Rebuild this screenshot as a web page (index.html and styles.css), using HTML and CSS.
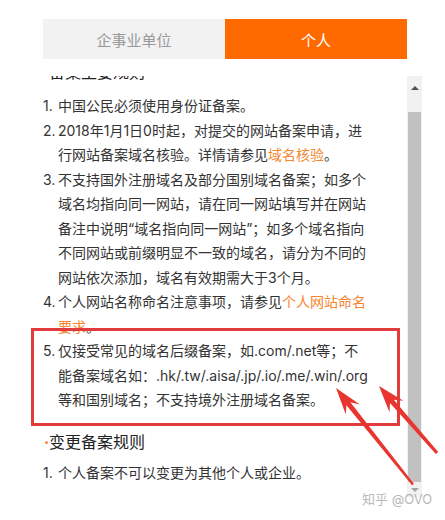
FILE: index.html
```html
<!DOCTYPE html>
<html lang="zh-CN">
<head>
<meta charset="utf-8">
<title>备案规则</title>
<link rel="stylesheet" href="styles.css">
</head>
<body>
<div class="page">
  <div class="tabs">
    <div class="tab">企事业单位</div>
    <div class="tab tab-active">个人</div>
  </div>
  <div class="panel">
    <div class="viewport">
      <div class="content">
        <section class="sec">
          <h3 class="sec-title"><span class="dot"></span>备案主要规则</h3>
          <ol class="rules">
            <li><span class="num">1.</span><span class="txt">中国公民必须使用身份证备案。</span></li>
            <li><span class="num">2.</span><span class="txt">2018年1月1日0时起，对提交的网站备案申请，进行网站备案域名核验。详情请参见<a class="link">域名核验</a>。</span></li>
            <li><span class="num">3.</span><span class="txt">不支持国外注册域名及部分国别域名备案；如多个域名均指向同一网站，请在同一网站填写并在网站备注中说明“域名指向同一网站”；如多个域名指向不同网站或前缀明显不一致的域名，请分为不同的网站依次添加，域名有效期需大于3个月。</span></li>
            <li><span class="num">4.</span><span class="txt">个人网站名称命名注意事项，请参见<a class="link">个人网站命名要求</a>。</span></li>
            <li><span class="num">5.</span><span class="txt">仅接受常见的域名后缀备案，如.com/.net等；不能备案域名如：.hk/.tw/.aisa/.jp/.io/.me/.win/.org等和国别域名；不支持境外注册域名备案。</span></li>
          </ol>
        </section>
        <section class="sec sec-next">
          <h3 class="sec-title"><span class="dot"></span>变更备案规则</h3>
          <ol class="rules">
            <li><span class="num">1.</span><span class="txt">个人备案不可以变更为其他个人或企业。</span></li>
          </ol>
        </section>
      </div>
    </div>
    <div class="scrollbar">
      <div class="sb-btn sb-up"><span class="tri tri-up"></span></div>
      <div class="sb-track"><div class="sb-thumb"></div></div>
      <div class="sb-btn sb-down"><span class="tri tri-down"></span></div>
    </div>
  </div>

  <div class="highlight"></div>

  <svg class="arrows" width="445" height="520" viewBox="0 0 445 520" aria-hidden="true">
    <polygon fill="#e8352f" points="336,388 359.9,404.5 350.4,402.2 413.9,483.8 412.1,485.2 346.4,405.2 345.8,414.6"/>
    <polygon fill="#e8352f" points="379,386 403.3,400.8 393.8,399.7 438.2,452.1 435.8,453.9 390.0,402.9 389.5,412.2"/>
  </svg>

  <div class="watermark">知乎 @OVO</div>
</div>
</body>
</html>
```

FILE: styles.css
```css
html, body {
  margin: 0;
  padding: 0;
  background: #ffffff;
}

body {
  font-family: "Inter", "Noto Sans CJK SC", sans-serif;
  color: #333333;
}

.page {
  position: relative;
  width: 445px;
  height: 520px;
  overflow: hidden;
}

.tabs {
  display: grid;
  grid-template-columns: 182px 182px;
  width: 364px;
  height: 40px;
  margin: 19px 0 0 43px;
}

.tab {
  display: flex;
  align-items: center;
  justify-content: center;
  background: #f2f2f2;
  color: #999999;
  font-size: 15px;
}

.tab-active {
  background: #ff6a00;
  color: #ffffff;
}

.panel {
  display: flex;
  width: 379px;
  height: 421px;
  margin: 17px 0 0 43px;
}

.viewport {
  flex: 1;
  overflow: hidden;
}

.content {
  margin-top: -16px;
}

.sec-title {
  display: flex;
  align-items: center;
  margin: 0 0 10px;
  font-size: 16px;
  line-height: 24px;
  font-weight: normal;
  color: #222222;
}

.sec-next .sec-title {
  margin-bottom: 7px;
}

.dot {
  width: 3px;
  height: 3px;
  border-radius: 50%;
  background: #f08a4b;
  margin: 2px 1px 0 2px;
}

.sec-next {
  margin-top: 17px;
}

.rules {
  list-style: none;
  margin: 0;
  padding: 0;
  width: 325px;
  font-size: 14px;
  line-height: 24.5px;
}

.rules li {
  display: flex;
}

.num {
  flex: 0 0 15px;
}

.txt {
  flex: 1;
}

.link {
  color: #f5862e;
  text-decoration: none;
}

.scrollbar {
  display: flex;
  flex-direction: column;
  width: 15px;
  background: #f1f1f1;
}

.sb-btn {
  display: flex;
  align-items: center;
  justify-content: center;
}

.sb-up {
  height: 24px;
}

.sb-down {
  height: 15px;
}

.sb-track {
  flex: 1;
  display: flex;
  padding: 12px 1px 0;
}

.sb-thumb {
  flex: 1;
  background: #c1c1c1;
}

.tri {
  width: 0;
  height: 0;
  border-left: 4px solid transparent;
  border-right: 4px solid transparent;
}

.tri-up {
  border-bottom: 4px solid #505050;
}

.tri-down {
  border-top: 4px solid #a3a3a3;
}

.highlight {
  position: absolute;
  left: 31px;
  top: 328px;
  width: 369px;
  height: 98px;
  box-sizing: border-box;
  border: 3px solid #e23b3b;
}

.arrows {
  position: absolute;
  left: 0;
  top: 0;
}

.watermark {
  position: absolute;
  left: 362px;
  top: 490px;
  font-size: 13px;
  line-height: 18px;
  color: #b9b9b9;
  white-space: nowrap;
}
```
